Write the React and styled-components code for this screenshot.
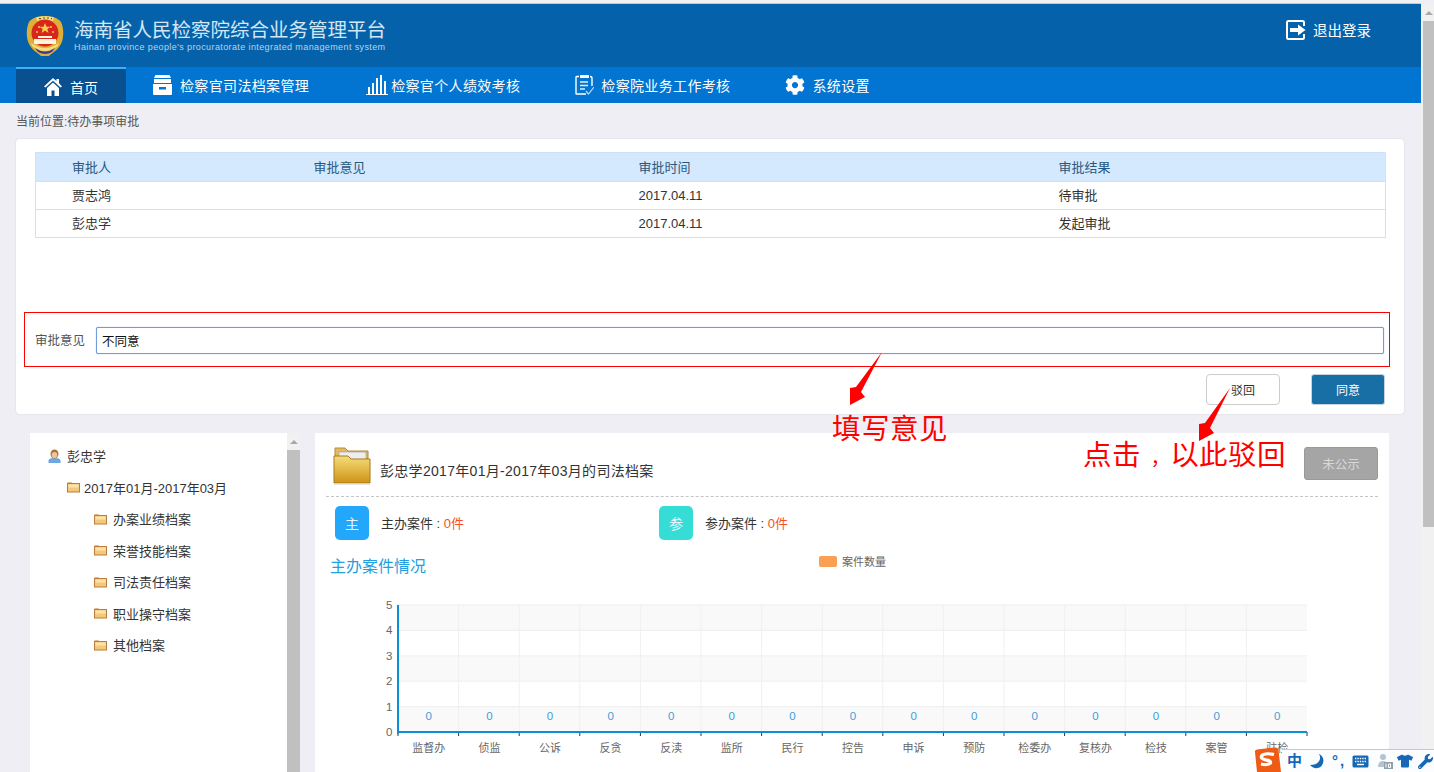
import React from "react";
import styled, { createGlobalStyle } from "styled-components";
import { FaCog, FaTshirt, FaWrench } from "react-icons/fa";

const GlobalStyle = createGlobalStyle`
  html, body {
    margin: 0;
    padding: 0;
    height: 100%;
    overflow: hidden;
    background: #eeeef4;
  }
  body, input, button {
    font-family: "Liberation Sans", "Noto Sans CJK SC", sans-serif;
  }
  * {
    box-sizing: border-box;
  }
`;

const Shell = styled.div`
  position: relative;
  display: flex;
  width: 1434px;
  height: 772px;
  overflow: hidden;
`;

const Page = styled.div`
  width: 1421px;
  height: 772px;
  flex: none;
  border-top: 3px solid #f1f1f1;
`;

const Header = styled.header`
  height: 64px;
  display: flex;
  align-items: center;
  justify-content: space-between;
  padding: 0 50px 0 25px;
  background: #0562aa;
  border-top: 1px solid #c8c8c8;
`;

const Brand = styled.div`
  display: flex;
  align-items: center;
  gap: 9px;
`;

const BrandTitle = styled.div`
  font-size: 19.5px;
  line-height: 24px;
  color: #d4e6f4;
  white-space: nowrap;
`;

const BrandSub = styled.div`
  font-size: 9px;
  line-height: 11px;
  letter-spacing: 0.39px;
  color: #b7d3ea;
  white-space: nowrap;
`;

const Logout = styled.div`
  display: flex;
  align-items: center;
  gap: 7px;
  margin-bottom: 12px;
  color: #fff;
  font-size: 14.5px;
`;

const Nav = styled.nav`
  height: 36px;
  display: flex;
  padding-left: 16px;
  background: #0274d1;
`;

const HomeTab = styled.div`
  width: 110px;
  display: flex;
  align-items: center;
  justify-content: center;
  gap: 8px;
  padding-top: 2px;
  color: #fff;
  font-size: 14px;
  background: #08508f;
  border-top: 2px solid #3fb0f5;
`;

const NavLinks = styled.div`
  display: flex;
  margin-left: 27px;
  gap: 55px;
`;

const NavLink = styled.div`
  display: flex;
  align-items: center;
  gap: ${(props) => props.$gap || 8}px;
  color: #fff;
  font-size: 14px;
  letter-spacing: 0.35px;
  white-space: nowrap;

  &:first-child {
    margin-right: 2px;
  }
`;

const Crumb = styled.div`
  height: 36px;
  padding-left: 16px;
  font-size: 12px;
  line-height: 38px;
  color: #555;
`;

const ApprovalCard = styled.section`
  position: relative;
  width: 1388px;
  height: 275px;
  margin-left: 16px;
  padding: 13px 19px 0;
  background: #fff;
  border-radius: 4px;
  box-shadow: 0 0 2px rgba(0, 0, 0, 0.12);
`;

const Table = styled.table`
  width: 1351px;
  border-collapse: collapse;
  table-layout: fixed;
  font-size: 13px;
  border: 1px solid #cde2f3;
`;

const HeadCell = styled.th`
  height: 29px;
  padding: 0 0 2px ${(props) => props.$indent || 0}px;
  width: ${(props) => props.$w}px;
  text-align: left;
  font-weight: 400;
  color: #28587f;
  background: #d4e9fd;
`;

const Row = styled.tr`
  border-top: 1px solid #cde2f3;
`;

// latin digits sit higher than the CJK fallback, so only CJK cells get the lift
const Cell = styled.td`
  height: 28px;
  padding: 0 0 ${(props) => (props.$digits ? 0 : 3)}px ${(props) => props.$indent || 0}px;
  color: #333;
`;

const OpinionBox = styled.div`
  display: flex;
  align-items: center;
  gap: 10px;
  width: 1366px;
  height: 55px;
  margin: 74px 0 0 -11px;
  padding: 0 5px 0 11px;
  border: 1px solid #f00;
`;

const OpinionLabel = styled.label`
  margin-left: -1px;
  margin-right: 1px;
  font-size: 12.5px;
  color: #555;
  white-space: nowrap;
`;

const OpinionInput = styled.input`
  flex: 1;
  height: 27px;
  margin-top: 1px;
  padding: 0 5px;
  font-size: 12.5px;
  color: #111;
  background: #fff;
  border: 1px solid #6f9be0;
  border-radius: 2px;
  box-shadow: 0 0 1px #6f9be0;
  outline: none;
`;

const Actions = styled.div`
  display: flex;
  justify-content: flex-end;
  gap: 31px;
  margin-top: 7px;
`;

const ActionButton = styled.button`
  width: 74px;
  height: 31px;
  padding: 0;
  font-size: 12px;
  color: ${(props) => (props.$primary ? "#fff" : "#333")};
  background: ${(props) => (props.$primary ? "#176fa6" : "#fff")};
  border: 1px solid ${(props) => (props.$primary ? "#c5d5e0" : "#ccc")};
  border-radius: ${(props) => (props.$primary ? 3 : 4)}px;
`;

const Lower = styled.div`
  display: flex;
  margin: 19px 0 0 30px;
  height: 339px;
`;

const TreePanel = styled.aside`
  width: 257px;
  padding-top: 7px;
  background: #fff;
`;

const TreeRow = styled.div`
  display: flex;
  align-items: center;
  gap: ${(props) => props.$gap}px;
  height: 31.5px;
  padding-left: ${(props) => props.$indent}px;
  font-size: 13px;
  color: #333;
`;

const TreeScroll = styled.div`
  width: 13px;
  flex: none;
  display: flex;
  flex-direction: column;
  background: #f1f1f1;
`;

const ScrollArrow = styled.div`
  height: 17px;
  flex: none;
  display: flex;
  align-items: center;
  justify-content: center;
  &::before {
    content: "";
    border-left: 4px solid transparent;
    border-right: 4px solid transparent;
    border-bottom: 4px solid #a8a8a8;
  }
`;

const ScrollThumb = styled.div`
  flex: 1;
  background: #c0c0c0;
`;

const Main = styled.main`
  width: 1074px;
  margin-left: 15px;
  padding: 0 11px;
  background: #fff;
`;

const ArchiveHead = styled.div`
  display: flex;
  align-items: flex-start;
  height: 64px;
  padding: 14px 0 0 7px;
  border-bottom: 1px dashed #c4c4c4;
`;

const ArchiveTitle = styled.div`
  flex: 1;
  margin: 15px 0 0 9px;
  font-size: 14px;
  line-height: 18px;
  letter-spacing: 0.3px;
  color: #333;
`;

const PublishButton = styled.button`
  width: 74px;
  height: 33px;
  padding: 0;
  font-size: 12.5px;
  color: #d8d8d8;
  background: #a5a5a5;
  border: 1px solid #999;
  border-radius: 3px;
`;

const Stats = styled.div`
  display: flex;
  height: 34px;
  margin: 9px 0 0 9px;
`;

const Stat = styled.div`
  width: 324px;
  display: flex;
  align-items: center;
  gap: 12px;
  padding-bottom: 1px;
  font-size: 13px;
  color: #333;
`;

const StatBadge = styled.div`
  width: 34px;
  height: 34px;
  display: flex;
  align-items: center;
  justify-content: center;
  font-size: 14px;
  color: #e8f6ff;
  background: ${(props) => props.$color};
  border-radius: 5px;
`;

const StatCount = styled.span`
  color: #f4511e;
`;

const ChartHead = styled.div`
  display: flex;
  height: 40px;
  padding: 15px 0 0 4px;
`;

const ChartTitle = styled.div`
  width: 489px;
  font-size: 16px;
  line-height: 24px;
  color: #239fe0;
`;

const Legend = styled.div`
  display: flex;
  align-items: center;
  gap: 5px;
  height: 14px;
  margin-top: -1px;
  font-size: 11px;
  color: #666;
`;

const LegendSwatch = styled.span`
  width: 18px;
  height: 11px;
  border-radius: 2px;
  background: #f9a055;
`;

const ChartSvg = styled.svg`
  display: block;
  margin-top: 24px;
  overflow: visible;
  font-family: "Liberation Sans", "Noto Sans CJK SC", sans-serif;
`;

const Scrollbar = styled.div`
  width: 13px;
  flex: none;
  display: flex;
  flex-direction: column;
  margin-top: 4px;
  padding-left: 2px;
  background: #f1f1f1;
`;

const ScrollThumbMain = styled.div`
  height: 506px;
  background: #c0c0c0;
`;

const Note = styled.div`
  position: absolute;
  left: ${(props) => props.$x}px;
  top: ${(props) => props.$y}px;
  font-size: 28.5px;
  line-height: 34px;
  letter-spacing: ${(props) => props.$spacing || 0}px;
  color: #f00;
  white-space: nowrap;
`;

const NoteComma = styled.span`
  padding-left: 10px;
  font-size: 19px;
`;

const NoteArrow = styled.svg`
  position: absolute;
  left: 0;
  top: 0;
  pointer-events: none;
`;

const ImeBar = styled.div`
  position: absolute;
  right: 0;
  bottom: 0;
  width: 152px;
  height: 23px;
  display: grid;
  grid-template-columns: 23px 22px 20px 25px 20px 21px 16px;
  align-items: center;
  padding-left: 5px;
  background: #fbfdff;
  border-top: 1px solid #b8cbdc;
  color: #1668b5;
`;

const ImeLogo = styled.svg`
  position: absolute;
  left: 1252px;
  bottom: 0;
`;

const ImeChar = styled.span`
  font-size: 15px;
  line-height: 20px;
  font-weight: 700;
  letter-spacing: ${(props) => props.$spacing || 0}px;
  color: #1668b5;
`;

const FolderSmall = () => (
  <svg width="13" height="12" viewBox="0 0 13 12">
    <path d="M0.5 2.5 L0.5 1.2 L4.5 1.2 L5.5 2.5 Z" fill="#d9a05a" />
    <rect x="0.5" y="2.5" width="12" height="8.5" fill="#f3c878" stroke="#bd7d3f" />
    <rect x="1.5" y="3.5" width="10" height="3" fill="#fbe2ae" />
  </svg>
);

const FolderLarge = () => (
  <svg width="38" height="38" viewBox="0 0 38 38">
    <defs>
      <linearGradient id="folderFace" x1="0" y1="0" x2="0" y2="1">
        <stop offset="0" stopColor="#f5dc7a" />
        <stop offset="1" stopColor="#cf9316" />
      </linearGradient>
    </defs>
    <path d="M2 1 H12 L15 4 H35 V12 H2 Z" fill="#e2b964" stroke="#b98a35" />
    <rect x="6" y="5" width="27" height="9" fill="#eeeeee" stroke="#9a9a9a" strokeWidth="0.6" />
    <path d="M1 9 H15 L18 12 H37 V36 H1 Z" fill="url(#folderFace)" stroke="#a87b1b" />
    <rect x="1" y="36" width="36" height="1.5" fill="#cfcfcf" />
  </svg>
);

const UserIcon = () => (
  <svg width="13" height="14" viewBox="0 0 13 14">
    <path d="M0.5 14 V11.5 C0.5 9.8 3 9 6.5 9 C10 9 12.5 9.8 12.5 11.5 V14 Z" fill="#6ea6df" />
    <ellipse cx="6.5" cy="5" rx="4" ry="4.6" fill="#a8703a" />
    <ellipse cx="6.5" cy="6" rx="2.8" ry="3.1" fill="#f0c49a" />
  </svg>
);

const Emblem = () => (
  <svg width="40" height="42" viewBox="0 0 40 42">
    <path d="M20 1 C27 1 33 3 36 7 C39 13 39 23 36 29 C33 35 27 38 24 41 H16 C13 38 7 35 4 29 C1 23 1 13 4 7 C7 3 13 1 20 1 Z" fill="#dfae36" />
    <path d="M11 2.5 Q20 0 29 2.5 L28 6 Q20 4 12 6 Z" fill="#f4dc83" />
    <path d="M14 3.6 H16 M18 3 H20 M22 3 H24 M26 3.6 H27" stroke="#6b4a16" strokeWidth="1.2" />
    <circle cx="20" cy="18" r="13.5" fill="#d9261c" />
    <path d="M20 8 l1.5 3.7 h4 l-3.2 2.4 l1.2 3.8 l-3.5 -2.3 l-3.5 2.3 l1.2 -3.8 l-3.2 -2.4 h4 Z" fill="#f5cf4a" />
    <circle cx="12" cy="17" r="1" fill="#f5cf4a" />
    <circle cx="28" cy="17" r="1" fill="#f5cf4a" />
    <circle cx="14" cy="12" r="1" fill="#f5cf4a" />
    <circle cx="26" cy="12" r="1" fill="#f5cf4a" />
    <path d="M13 23 H27 V21 H13 Z" fill="#fff4d8" />
    <path d="M9 24 H31 V29 H9 Z" fill="#fff4d8" />
    <path d="M6 28 Q20 38 34 28 L33 31 Q20 41 7 31 Z" fill="#f4dc83" />
    <path d="M10 33 Q20 40 30 33 L27 37 Q20 41 13 37 Z" fill="#3b3f8f" />
  </svg>
);

const HomeIcon = () => (
  <svg width="18" height="18" viewBox="0 0 18 18">
    <path d="M9 0 L12.5 3 V1 H15 V5.2 L18 8.4 L16.6 9.6 L9 2.8 L1.4 9.6 L0 8.4 Z" fill="#fff" />
    <path d="M3 10 L9 4.6 L15 10 V18 H10.5 V12.5 H7.5 V18 H3 Z" fill="#fff" />
  </svg>
);

const LogoutIcon = () => (
  <svg width="20" height="20" viewBox="0 0 20 20">
    <path d="M18 6 V2.5 Q18 1 16.5 1 H2.5 Q1 1 1 2.5 V17.5 Q1 19 2.5 19 H16.5 Q18 19 18 17.5 V14" fill="none" stroke="#fff" strokeWidth="2" />
    <path d="M4 8 H12 V4.5 L19.5 10 L12 15.5 V12 H4 Z" fill="#fff" />
  </svg>
);

const ArchiveIcon = () => (
  <svg width="19" height="20" viewBox="0 0 19 20">
    <path d="M2 1 Q2 0 3 0 H16 Q17 0 17 1 L18 3 H1 Z" fill="#fff" />
    <rect x="1" y="4" width="17" height="4" fill="#fff" />
    <path d="M0 9 H19 V19 Q19 20 18 20 H1 Q0 20 0 19 Z" fill="#fff" />
    <rect x="6" y="12" width="7" height="2.5" fill="#0274d1" />
  </svg>
);

const BarsIcon = () => (
  <svg width="22" height="20" viewBox="0 0 22 20">
    <path d="M0 19 H22 V20 H0 Z M2 12 H4 V19 H2 Z M6 8 H8 V19 H6 Z M10 3 H12 V19 H10 Z M14 0 H16 V19 H14 Z M18 6 H20 V19 H18 Z" fill="#fff" />
  </svg>
);

const ClipboardIcon = () => (
  <svg width="19" height="20" viewBox="0 0 19 20">
    <path d="M4 1.5 H1.5 Q1 1.5 1 2 V18.5 Q1 19 1.5 19 H11 M15 1.5 Q17 1.5 17 3 V11" fill="none" stroke="#fff" strokeWidth="1.4" />
    <rect x="5" y="0" width="9" height="3" rx="0.6" fill="#fff" />
    <path d="M5 7 H13 M5 10.5 H13 M5 14 H10" stroke="#dfeefa" strokeWidth="1.3" />
    <path d="M11 16 L13.5 19 L19 12" fill="none" stroke="#bcd9f1" strokeWidth="1.2" />
  </svg>
);

const KeyboardIcon = () => (
  <svg width="17" height="13" viewBox="0 0 17 13">
    <rect x="0.5" y="0.5" width="16" height="12" rx="1.5" fill="#1668b5" />
    <path d="M3 3.5 H14 M3 6.5 H14" stroke="#fff" strokeWidth="1.4" strokeDasharray="1.4 1" />
    <path d="M5 9.5 H12" stroke="#fff" strokeWidth="1.4" />
  </svg>
);

const categories = ["监督办", "侦监", "公诉", "反贪", "反渎", "监所", "民行", "控告", "申诉", "预防", "检委办", "复核办", "检技", "案管", "驻检"];

const CHART_X = 72;
const CHART_W = 909;
const BAND = 25.4;
const COL = CHART_W / 15;

const CaseChart = () => (
  <ChartSvg width="1052" height="170" viewBox="0 0 1052 170">
    {[0, 2, 4].map((i) => (
      <rect key={i} x={CHART_X} y={BAND * i + 1} width={CHART_W} height={BAND} fill="#f9f9f9" />
    ))}
    {[0, 1, 2, 3, 4].map((i) => (
      <line key={i} x1={CHART_X} x2={CHART_X + CHART_W} y1={BAND * i + 1} y2={BAND * i + 1} stroke="#efefef" />
    ))}
    {categories.map((name, i) => (
      <g key={name}>
        {i > 0 && <line x1={CHART_X + COL * i} x2={CHART_X + COL * i} y1="1" y2="128" stroke="#f0f0f0" />}
        <line x1={CHART_X + COL * i} x2={CHART_X + COL * i} y1="128" y2="132" stroke="#333" />
        <text x={CHART_X + COL * (i + 0.5) + 0.5} y="116" textAnchor="middle" fontSize="11.5" fill="#3d9fd6">0</text>
        <text x={CHART_X + COL * (i + 0.5) + 0.5} y="148" textAnchor="middle" fontSize="11" fill="#666">{name}</text>
      </g>
    ))}
    <line x1={CHART_X + CHART_W} x2={CHART_X + CHART_W} y1="128" y2="132" stroke="#333" />
    {[5, 4, 3, 2, 1, 0].map((v, i) => (
      <text key={v} x="60" y={BAND * i + 5} textAnchor="start" fontSize="11.5" fill="#666">{v}</text>
    ))}
    <rect x={CHART_X - 1} y="1" width="2" height="129" fill="#0a90d8" />
    <rect x={CHART_X - 1} y="127" width={CHART_W + 1} height="2" fill="#0a90d8" />
  </ChartSvg>
);

const folders = ["办案业绩档案", "荣誉技能档案", "司法责任档案", "职业操守档案", "其他档案"];

const App = () => {
  return (
    <>
      <GlobalStyle />
      <Shell>
        <Page>
          <Header>
            <Brand>
              <Emblem />
              <div>
                <BrandTitle>海南省人民检察院综合业务管理平台</BrandTitle>
                <BrandSub>Hainan province people's procuratorate integrated management system</BrandSub>
              </div>
            </Brand>
            <Logout>
              <LogoutIcon />
              退出登录
            </Logout>
          </Header>
          <Nav>
            <HomeTab>
              <HomeIcon />
              首页
            </HomeTab>
            <NavLinks>
              <NavLink>
                <ArchiveIcon />
                检察官司法档案管理
              </NavLink>
              <NavLink $gap={3}>
                <BarsIcon />
                检察官个人绩效考核
              </NavLink>
              <NavLink $gap={7}>
                <ClipboardIcon />
                检察院业务工作考核
              </NavLink>
              <NavLink $gap={7}>
                <FaCog size={20} />
                系统设置
              </NavLink>
            </NavLinks>
          </Nav>
          <Crumb>当前位置:待办事项审批</Crumb>
          <ApprovalCard>
            <Table>
              <thead>
                <tr>
                  <HeadCell $w={278} $indent={36}>审批人</HeadCell>
                  <HeadCell $w={325}>审批意见</HeadCell>
                  <HeadCell $w={420}>审批时间</HeadCell>
                  <HeadCell>审批结果</HeadCell>
                </tr>
              </thead>
              <tbody>
                <Row>
                  <Cell $indent={36}>贾志鸿</Cell>
                  <Cell />
                  <Cell $digits>2017.04.11</Cell>
                  <Cell>待审批</Cell>
                </Row>
                <Row>
                  <Cell $indent={36}>彭忠学</Cell>
                  <Cell />
                  <Cell $digits>2017.04.11</Cell>
                  <Cell>发起审批</Cell>
                </Row>
              </tbody>
            </Table>
            <OpinionBox>
              <OpinionLabel>审批意见</OpinionLabel>
              <OpinionInput defaultValue="不同意" />
            </OpinionBox>
            <Actions>
              <ActionButton>驳回</ActionButton>
              <ActionButton $primary>同意</ActionButton>
            </Actions>
          </ApprovalCard>
          <Lower>
            <TreePanel>
              <TreeRow $indent={18} $gap={6}>
                <UserIcon />
                彭忠学
              </TreeRow>
              <TreeRow $indent={37} $gap={4}>
                <FolderSmall />
                2017年01月-2017年03月
              </TreeRow>
              {folders.map((name) => (
                <TreeRow key={name} $indent={64} $gap={6}>
                  <FolderSmall />
                  {name}
                </TreeRow>
              ))}
            </TreePanel>
            <TreeScroll>
              <ScrollArrow />
              <ScrollThumb />
            </TreeScroll>
            <Main>
              <ArchiveHead>
                <FolderLarge />
                <ArchiveTitle>彭忠学2017年01月-2017年03月的司法档案</ArchiveTitle>
                <PublishButton>未公示</PublishButton>
              </ArchiveHead>
              <Stats>
                <Stat>
                  <StatBadge $color="#22a7fb">主</StatBadge>
                  <span>主办案件 : <StatCount>0件</StatCount></span>
                </Stat>
                <Stat>
                  <StatBadge $color="#36dcd6">参</StatBadge>
                  <span>参办案件 : <StatCount>0件</StatCount></span>
                </Stat>
              </Stats>
              <ChartHead>
                <ChartTitle>主办案件情况</ChartTitle>
                <Legend>
                  <LegendSwatch />
                  案件数量
                </Legend>
              </ChartHead>
              <CaseChart />
            </Main>
          </Lower>
        </Page>
        <Scrollbar>
          <ScrollArrow />
          <ScrollThumbMain />
        </Scrollbar>

        <NoteArrow width="1434" height="772" viewBox="0 0 1434 772">
          <polygon points="882,352 856,387 850,388 850,405 865,397 861,392" fill="#f00" />
          <polygon points="1230,388 1205,423 1199,424 1199,441 1214,433 1210,428" fill="#f00" />
        </NoteArrow>
        <Note $x={832} $y={412} $spacing={0.5}>填写意见</Note>
        <Note $x={1083} $y={438} $spacing={0.4}>点击<NoteComma>，</NoteComma>以此驳回</Note>

        <ImeBar>
          <ImeChar>中</ImeChar>
          <svg width="14" height="15" viewBox="0 0 14 15">
            <path d="M9 0 C12 5 9 11 0 11 C3 15 11 16 13 9 C14.5 5 12 1 9 0 Z" fill="#1668b5" />
          </svg>
          <ImeChar $spacing={2}>°,</ImeChar>
          <KeyboardIcon />
          <svg width="16" height="16" viewBox="0 0 16 16">
            <circle cx="6" cy="4" r="3" fill="#b5c3cf" />
            <path d="M1 14 Q1 8 6 8 Q11 8 11 14 Z" fill="#b5c3cf" />
            <rect x="7" y="9" width="9" height="7" fill="#8fa0ae" />
            <path d="M9 10.5 V14.5 M11.5 11 H13.5 V14.5 H11.5 Z" stroke="#fff" fill="none" />
          </svg>
          <FaTshirt size={16} />
          <FaWrench size={15} />
        </ImeBar>
        <ImeLogo width="30" height="25" viewBox="0 0 30 25">
          <path d="M3 5 Q2.5 3 5 2.5 L23 0.5 Q26 0 26.5 3 L29 25 H5 Z" fill="#ef5a14" />
          <path d="M22 7.5 Q12 5.5 9.5 9 Q8.5 12 13.5 12.8 Q19 13.5 18.5 16 Q16.5 18.5 9 17" fill="none" stroke="#fff" strokeWidth="3.2" />
        </ImeLogo>
      </Shell>
    </>
  );
};

export default App;
